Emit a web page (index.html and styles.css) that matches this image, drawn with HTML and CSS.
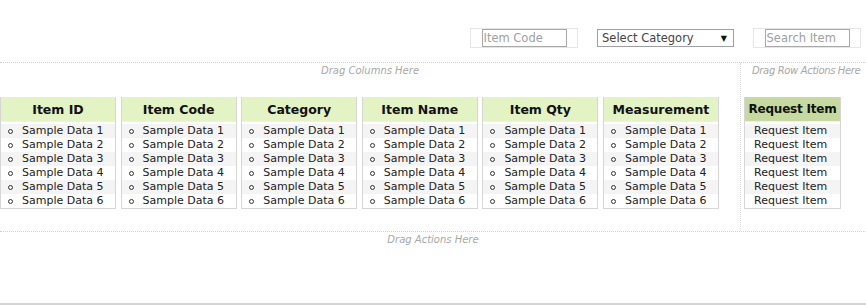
FILE: index.html
```html
<!DOCTYPE html>
<html lang="en">
<head>
  <meta charset="UTF-8">
  <title>Item Pivot</title>
  <link rel="stylesheet" href="styles.css">
</head>
<body>
  <div class="filters">
    <div class="filter-cell"><input type="text" placeholder="Item Code"></div>
    <div class="select-box"><span>Select Category</span><span class="arrow">&#9660;</span></div>
    <div class="filter-cell"><input type="text" placeholder="Search Item"></div>
  </div>

  <div class="pivot">
    <div class="main-area">
      <div class="drop-hint">Drag Columns Here</div>
      <div class="columns">
        <div class="column">
          <div class="col-head">Item ID</div>
          <ul class="col-list">
            <li>Sample Data 1</li><li>Sample Data 2</li><li>Sample Data 3</li>
            <li>Sample Data 4</li><li>Sample Data 5</li><li>Sample Data 6</li>
          </ul>
        </div>
        <div class="column">
          <div class="col-head">Item Code</div>
          <ul class="col-list">
            <li>Sample Data 1</li><li>Sample Data 2</li><li>Sample Data 3</li>
            <li>Sample Data 4</li><li>Sample Data 5</li><li>Sample Data 6</li>
          </ul>
        </div>
        <div class="column">
          <div class="col-head">Category</div>
          <ul class="col-list">
            <li>Sample Data 1</li><li>Sample Data 2</li><li>Sample Data 3</li>
            <li>Sample Data 4</li><li>Sample Data 5</li><li>Sample Data 6</li>
          </ul>
        </div>
        <div class="column">
          <div class="col-head">Item Name</div>
          <ul class="col-list">
            <li>Sample Data 1</li><li>Sample Data 2</li><li>Sample Data 3</li>
            <li>Sample Data 4</li><li>Sample Data 5</li><li>Sample Data 6</li>
          </ul>
        </div>
        <div class="column">
          <div class="col-head">Item Qty</div>
          <ul class="col-list">
            <li>Sample Data 1</li><li>Sample Data 2</li><li>Sample Data 3</li>
            <li>Sample Data 4</li><li>Sample Data 5</li><li>Sample Data 6</li>
          </ul>
        </div>
        <div class="column">
          <div class="col-head">Measurement</div>
          <ul class="col-list">
            <li>Sample Data 1</li><li>Sample Data 2</li><li>Sample Data 3</li>
            <li>Sample Data 4</li><li>Sample Data 5</li><li>Sample Data 6</li>
          </ul>
        </div>
      </div>
    </div>
    <div class="row-actions">
      <div class="drop-hint right">Drag Row Actions Here</div>
      <div class="column action">
        <div class="col-head">Request Item</div>
        <ul class="col-list plain">
          <li>Request Item</li><li>Request Item</li><li>Request Item</li>
          <li>Request Item</li><li>Request Item</li><li>Request Item</li>
        </ul>
      </div>
    </div>
  </div>

  <div class="actions-zone">
    <div class="drop-hint">Drag Actions Here</div>
  </div>
</body>
</html>
```

FILE: styles.css
```css
body {
  margin: 0;
  font-family: "DejaVu Sans", Verdana, sans-serif;
  font-size: 11px;
  color: #222;
  background: #fff;
  height: 305px;
  box-sizing: border-box;
  border-bottom: 2px solid #d4d4d4;
  overflow: hidden;
}

.filters {
  display: flex;
  justify-content: flex-end;
  align-items: flex-start;
  gap: 19px;
  padding: 28px 5px 0 0;
  height: 63px;
  box-sizing: border-box;
  border-bottom: 1px dotted #d0d0d0;
}

.filter-cell {
  width: 108px;
  height: 20px;
  box-sizing: border-box;
  border: 1px solid #e6e6e6;
  display: flex;
  justify-content: center;
  align-items: center;
}

.filter-cell input {
  width: 85px;
  height: 18px;
  box-sizing: border-box;
  border: 1px solid #a8a8a8;
  padding: 0 1px;
  font-family: inherit;
  font-size: 11.5px;
  outline: none;
}

.filter-cell input::placeholder {
  color: #a0a0a0;
}

.select-box {
  width: 137px;
  height: 18px;
  margin-top: 1px;
  box-sizing: border-box;
  border: 1px solid #a0a0a0;
  display: flex;
  justify-content: space-between;
  align-items: center;
  padding: 0 6px 0 4px;
  font-size: 11.5px;
  color: #444;
}

.select-box .arrow {
  font-size: 8px;
  color: #111;
}

.pivot {
  display: flex;
  height: 168px;
  border-bottom: 1px dotted #d0d0d0;
}

.main-area {
  flex: none;
  width: 740px;
  border-right: 1px dotted #d8d8d8;
}

.row-actions {
  flex: 1;
  min-width: 0;
  padding-left: 3px;
}

.drop-hint {
  text-align: center;
  font-style: italic;
  font-size: 10px;
  color: #a8a8a8;
  padding-top: 2px;
  height: 34px;
  white-space: nowrap;
  box-sizing: border-box;
}

.drop-hint.right {
  text-align: left;
  padding-left: 8px;
  letter-spacing: -0.35px;
}

.columns {
  display: grid;
  grid-template-columns: repeat(6, 116px);
  column-gap: 4.6px;
}

.column {
  border: 1px solid #d6d6d6;
  border-top: none;
  background: #fff;
}

.column.action {
  width: 95px;
}

.col-head {
  height: 24px;
  line-height: 25px;
  text-align: center;
  font-weight: bold;
  font-size: 12.5px;
  color: #111;
  background: #e3f3c4;
  border-bottom: 1px solid #eef2e6;
  white-space: nowrap;
}

.action .col-head {
  background: #c6d99e;
  font-size: 12px;
  letter-spacing: -0.2px;
}

.col-list {
  margin: 0;
  padding: 2px 0 0 0;
  list-style: none;
}

.col-list li {
  height: 14px;
  line-height: 14px;
  padding-left: 21px;
  position: relative;
}

.col-list li:nth-child(odd) {
  background: #f4f4f4;
}

.col-list li::before {
  content: "";
  position: absolute;
  left: 7px;
  top: 5px;
  width: 3px;
  height: 3px;
  border: 1px solid #333;
  border-radius: 50%;
}

.col-list.plain li {
  padding-left: 9px;
}

.col-list.plain li::before {
  display: none;
}
```
